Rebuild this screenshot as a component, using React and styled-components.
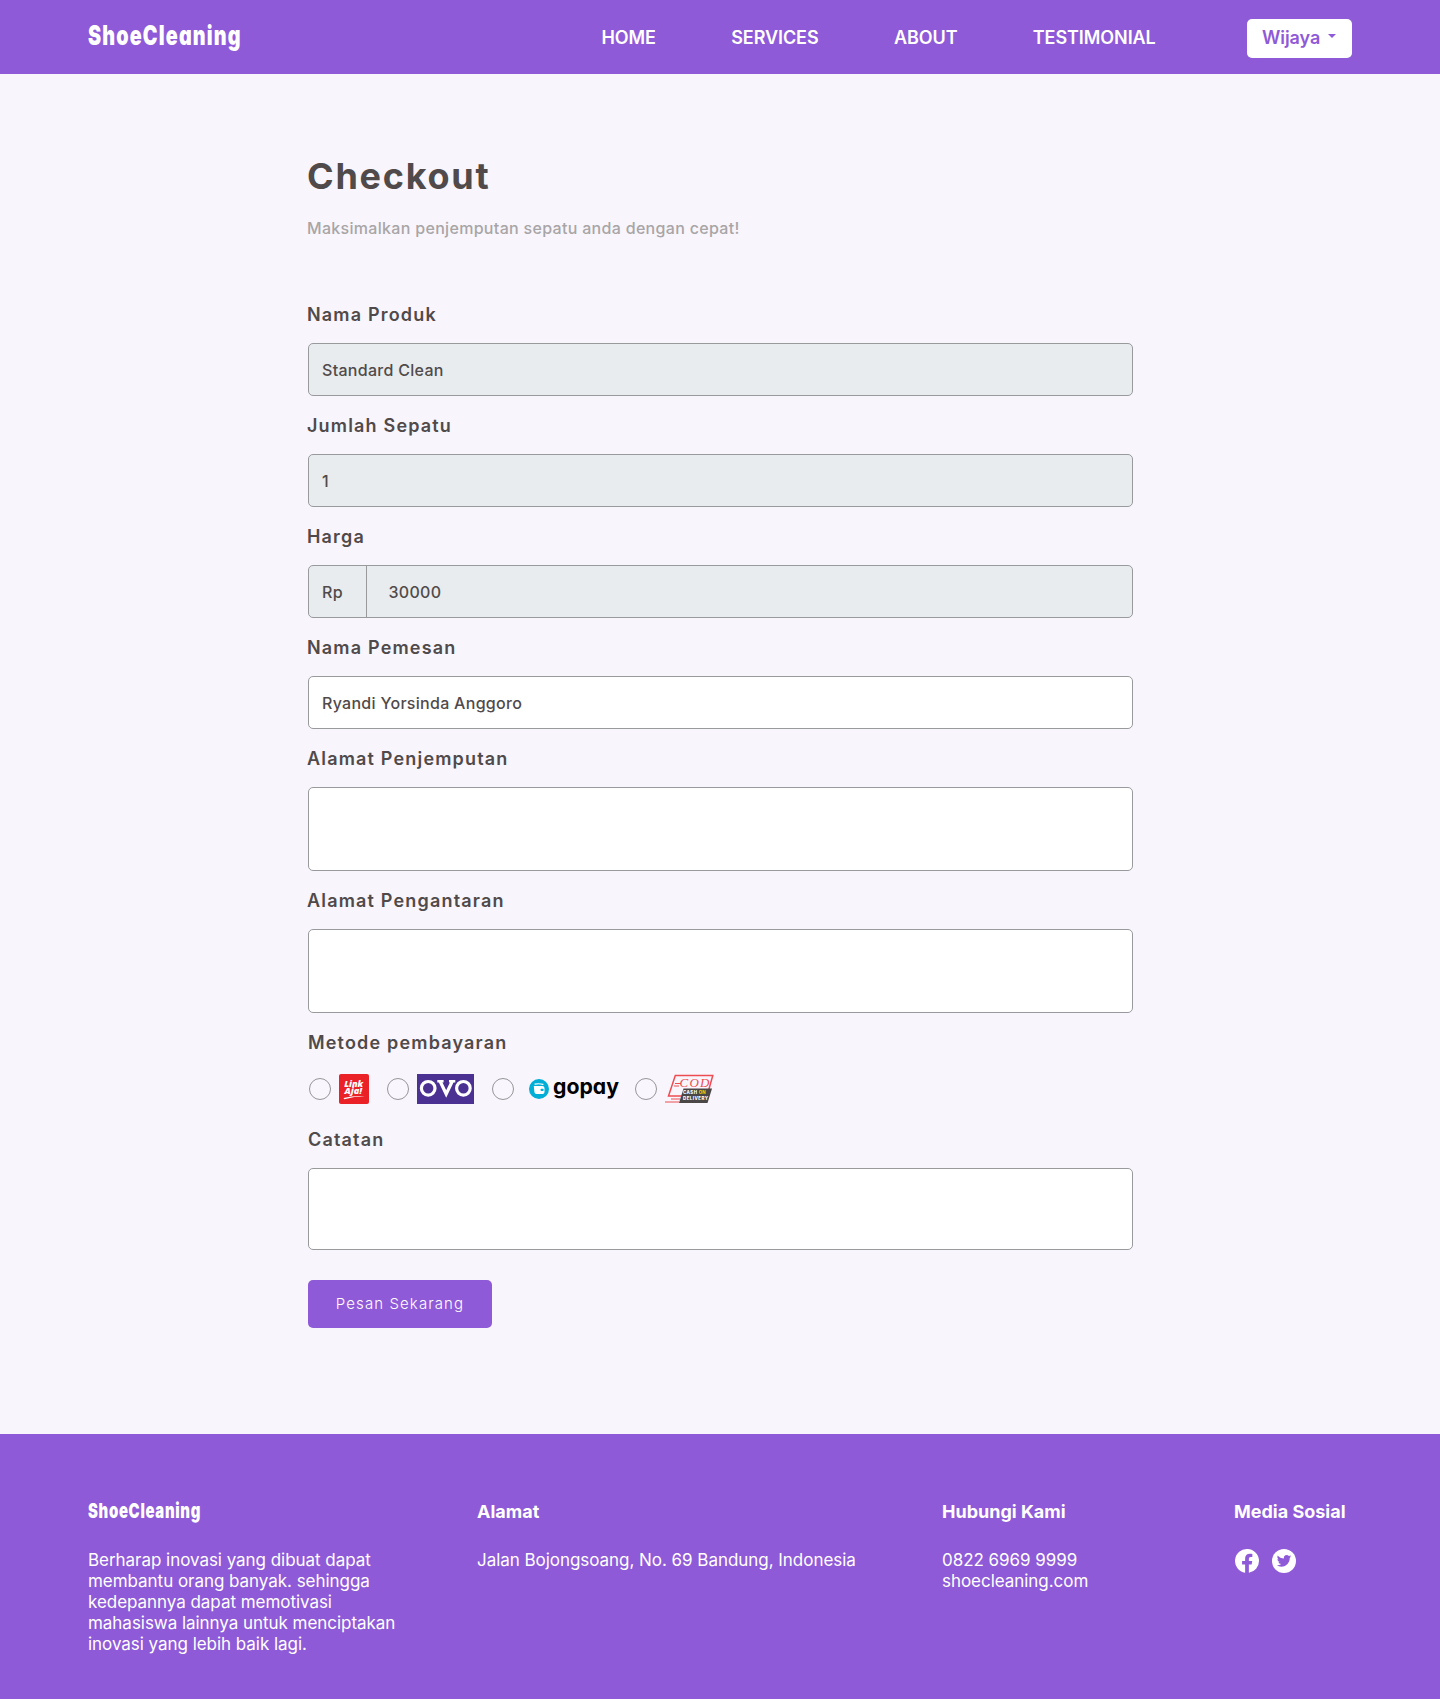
import React from "react";
import styled, { createGlobalStyle } from "styled-components";

const Global = createGlobalStyle`
  * { box-sizing: border-box; }
  body { margin: 0; background: #f8f5fd; font-family: Inter, "Liberation Sans", sans-serif; color: #504a4a; }
`;

const Header = styled.header`
  height: 74px;
  padding: 0 88px;
  background: #8f5ad8;
  display: flex;
  align-items: center;
  justify-content: space-between;
`;

const Brand = styled.div`
  width: ${(p) => p.$width}px;
  margin: ${(p) => p.$lift ?? 0}px 0 ${(p) => -(p.$lift ?? 0)}px;
  white-space: nowrap;
  color: #fff;
  font-weight: ${(p) => p.$weight};
  font-size: ${(p) => p.$size}px;
  line-height: ${(p) => p.$line}px;
  letter-spacing: ${(p) => p.$spacing}px;
  font-feature-settings: ${(p) => (p.$round ? '"cv11"' : "normal")};
  transform: scaleX(${(p) => p.$stretch});
  transform-origin: left center;
`;

const Nav = styled.nav`
  display: flex;
  align-items: center;
  gap: 75.3px;
`;

const NavLink = styled.a`
  padding-top: 2px;
  color: #fff;
  font-size: 18px;
  line-height: 22px;
  font-weight: 600;
  letter-spacing: -0.07px;
`;

const UserButton = styled.button`
  width: 105px;
  height: 39px;
  margin: 2px 0 0 16px;
  padding: 0 0 0 15px;
  display: flex;
  align-items: center;
  gap: 8px;
  border: 0;
  border-radius: 5px;
  background: #fff;
  color: #8f5ad8;
  font: 600 18px/22px Inter, sans-serif;
  letter-spacing: -0.07px;
`;

const Caret = styled.span`
  margin-top: -4px;
  border: 4px solid transparent;
  border-top-color: #8f5ad8;
  border-bottom: 0;
`;

const Main = styled.main`
  width: 826px;
  height: 1360px;
  margin: 0 auto 0 307px;
  padding: 80px 0 0;
`;

const Title = styled.h1`
  margin: 0;
  font-size: 36px;
  line-height: 44px;
  font-weight: 700;
  letter-spacing: 1.75px;
`;

const Subtitle = styled.p`
  margin: 20px 0 0;
  font-size: 16px;
  line-height: 20px;
  font-weight: 500;
  letter-spacing: 0.31px;
  color: #a8a5a6;
`;

const Form = styled.form`
  margin-top: 66px;
  display: flex;
  flex-direction: column;
`;

const Field = styled.div`
  display: flex;
  flex-direction: column;
  margin-bottom: ${(p) => p.$after ?? 19}px;
`;

const Label = styled.label`
  height: 22px;
  margin-bottom: 17px;
  padding-left: ${(p) => p.$inset ?? 0}px;
  font-size: 18px;
  line-height: 22px;
  font-weight: 600;
  letter-spacing: 1.18px;
`;

const Box = styled.div`
  height: ${(p) => p.$height ?? 53}px;
  margin-left: 1px;
  display: flex;
  overflow: hidden;
  border: 1px solid #999a9c;
  border-radius: 5px;
  background: ${(p) => (p.$locked ? "#e8ecef" : "#fff")};
`;

const Prefix = styled.span`
  width: 58px;
  padding-left: 13px;
  display: flex;
  align-items: center;
  border-right: 1px solid #999a9c;
  font-size: 16px;
  font-weight: 500;
  letter-spacing: 0.3px;
`;

const Input = styled.input`
  flex: 1;
  padding: 0 0 0 ${(p) => p.$indent ?? 13}px;
  border: 0;
  outline: 0;
  background: transparent;
  color: #504a4a;
  font: 500 16px/20px Inter, sans-serif;
  letter-spacing: 0.29px;
`;

const TextArea = styled.textarea`
  flex: 1;
  padding: 12px 13px;
  border: 0;
  outline: 0;
  resize: none;
  background: transparent;
  font: 500 16px/20px Inter, sans-serif;
`;

const Payments = styled.div`
  height: 32px;
  margin-top: 2px;
  padding-left: 2px;
  display: flex;
  align-items: center;
`;

const Option = styled.label`
  display: flex;
  align-items: center;
  gap: ${(p) => p.$gap}px;
  margin-right: ${(p) => p.$after}px;
`;

const Radio = styled.input`
  appearance: none;
  width: 22px;
  height: 22px;
  margin: 0;
  border: 1px solid #969598;
  border-radius: 50%;
  background: #f9f7fd;
`;

const Submit = styled.button`
  width: 184px;
  height: 48px;
  margin-left: 1px;
  border: 0;
  border-radius: 5px;
  background: #8f5ad8;
  color: #fff;
  font: 300 15px/18px Inter, sans-serif;
  letter-spacing: 1.1px;
`;

const Footer = styled.footer`
  height: 265px;
  padding: 67px 88px 0;
  display: grid;
  grid-template-columns: 389px 465px 292px auto;
  background: #8f5ad8;
  color: #fff;
`;

const Column = styled.section`
  display: flex;
  flex-direction: column;
  gap: 27px;
`;

const Heading = styled.h2`
  margin: 0;
  font-size: 18px;
  line-height: 22px;
  font-weight: 700;
`;

const Copy = styled.p`
  width: ${(p) => p.$width ?? 400}px;
  margin: 0;
  font-size: 17px;
  line-height: 21px;
  font-weight: 400;
  letter-spacing: -0.04px;
`;

const Socials = styled.div`
  margin-top: -1px;
  padding-left: 1px;
  display: flex;
  gap: 13px;
`;

function LinkAja() {
  return (
    <svg width="30" height="30" viewBox="0 0 30 30">
      <rect width="30" height="30" rx="2" fill="#ea2127" />
      <text fill="#fff" fontFamily="Open Sans, sans-serif" fontWeight="800" fontStyle="italic" fontSize="9">
        <tspan x="5.2" y="12.8" textLength="19" lengthAdjust="spacingAndGlyphs">Link</tspan>
        <tspan x="5.5" y="20" textLength="17.5" lengthAdjust="spacingAndGlyphs">Aja!</tspan>
      </text>
      <path d="M4.5 24Q15 21.5 26 22.3Q15 22.4 5.4 25.2Z" fill="#fff" />
    </svg>
  );
}

function Ovo() {
  return (
    <svg width="57" height="30" viewBox="0 0 57 30">
      <rect width="57" height="30" fill="#4b3192" />
      <g fill="none" stroke="#fff" strokeWidth="3.2">
        <circle cx="11.2" cy="14.3" r="6.8" />
        <circle cx="46.4" cy="14.3" r="6.8" />
        <path d="M23.2 7.5L29.2 20L35.2 7.5" />
        <path d="M20.3 7.2H26.6M32 7.2H38.3" strokeWidth="2.4" />
      </g>
    </svg>
  );
}

function Gopay() {
  return (
    <svg width="90" height="30" viewBox="0 -2 90 30">
      <circle cx="10" cy="13" r="10" fill="#00aed6" />
      <path d="M6 8.2Q10 7.2 14 8.4" stroke="#fff" strokeWidth="1.2" fill="none" strokeLinecap="round" />
      <path d="M4.8 10H13.2Q15.5 10 15.5 12V16Q15.5 18 13.5 18H7.5Q5.6 18 5.4 16Z" fill="#fff" />
      <rect x="11.5" y="12.8" width="3.2" height="2.2" rx="1" fill="#00aed6" />
      <text
        x="24"
        y="17.8"
        fontFamily="Inter, sans-serif"
        fontWeight="700"
        fontSize="21.5"
        textLength="66"
        lengthAdjust="spacingAndGlyphs"
        style={{ fontFeatureSettings: '"cv11"' }}
      >
        gopay
      </text>
    </svg>
  );
}

function Cod() {
  return (
    <svg width="50" height="30" viewBox="0 0 50 30">
      <path d="M10.3 1.5H47.8L42 22H3.5Z" fill="none" stroke="#ed4c50" strokeWidth="1.5" />
      <path d="M10 9.5H16M9 12H14M0 28H14M6 25H15" stroke="#ed4c50" strokeWidth="1" />
      <text x="14.5" y="12.7" fill="#ed4c50" fontFamily="Liberation Serif, serif" fontStyle="italic" fontSize="13" textLength="30" lengthAdjust="spacing">COD</text>
      <path d="M18.5 14.5H47L42.5 29H14Z" fill="#4b4747" />
      <g fill="#fff" fontFamily="Inter, sans-serif" fontWeight="800" fontSize="4.4">
        <text x="18" y="20.3" textLength="14">CASH</text>
        <text x="33.7" y="20.3" fill="#ffc20e" textLength="7">ON</text>
        <text x="18" y="26.4" textLength="25">DELIVERY</text>
      </g>
    </svg>
  );
}

function Facebook() {
  return (
    <svg width="24" height="24" viewBox="0 0 24 24" fill="#fff">
      <path d="M24 12A12 12 0 1 0 10.13 23.85V15.47H7.08V12H10.13V9.36C10.13 6.35 11.92 4.69 14.66 4.69C15.97 4.69 17.34 4.92 17.34 4.92V7.88H15.83C14.34 7.88 13.87 8.8 13.87 9.75V12H17.2L16.67 15.47H13.87V23.85A12 12 0 0 0 24 12Z" />
    </svg>
  );
}

function Twitter() {
  return (
    <svg width="24" height="24" viewBox="0 0 24 24">
      <circle cx="12" cy="12" r="12" fill="#fff" />
      <path
        transform="translate(4.8 4.6) scale(.6)"
        fill="#8f5ad8"
        d="M23.953 4.57a10 10 0 01-2.825.775 4.958 4.958 0 002.163-2.723c-.951.555-2.005.959-3.127 1.184a4.92 4.92 0 00-8.384 4.482C7.69 8.095 4.067 6.13 1.64 3.162a4.822 4.822 0 00-.666 2.475c0 1.71.87 3.213 2.188 4.096a4.904 4.904 0 01-2.228-.616v.06a4.923 4.923 0 003.946 4.827 4.996 4.996 0 01-2.212.085 4.936 4.936 0 004.604 3.417 9.867 9.867 0 01-6.102 2.105c-.39 0-.779-.023-1.17-.067a13.995 13.995 0 007.557 2.209c9.053 0 13.998-7.496 13.998-13.985 0-.21 0-.42-.015-.63A9.935 9.935 0 0024 4.59z"
      />
    </svg>
  );
}

export default function App() {
  return (
    <>
      <Global />
      <Header>
        <Brand $width={154} $size={27} $line={34} $lift={-1} $weight={900} $spacing={1.6} $stretch={0.73} $round>ShoeCleaning</Brand>
        <Nav>
          <NavLink>HOME</NavLink>
          <NavLink>SERVICES</NavLink>
          <NavLink>ABOUT</NavLink>
          <NavLink>TESTIMONIAL</NavLink>
          <UserButton>Wijaya<Caret /></UserButton>
        </Nav>
      </Header>
      <Main>
        <Title>Checkout</Title>
        <Subtitle>Maksimalkan penjemputan sepatu anda dengan cepat!</Subtitle>
        <Form>
          <Field>
            <Label>Nama Produk</Label>
            <Box $locked><Input readOnly value="Standard Clean" /></Box>
          </Field>
          <Field>
            <Label>Jumlah Sepatu</Label>
            <Box $locked><Input readOnly value="1" /></Box>
          </Field>
          <Field>
            <Label>Harga</Label>
            <Box $locked><Prefix>Rp</Prefix><Input readOnly $indent={21.5} value="30000" /></Box>
          </Field>
          <Field>
            <Label>Nama Pemesan</Label>
            <Box><Input defaultValue="Ryandi Yorsinda Anggoro" /></Box>
          </Field>
          <Field>
            <Label>Alamat Penjemputan</Label>
            <Box $height={84}><TextArea /></Box>
          </Field>
          <Field>
            <Label>Alamat Pengantaran</Label>
            <Box $height={84}><TextArea /></Box>
          </Field>
          <Field $after={24}>
            <Label $inset={1}>Metode pembayaran</Label>
            <Payments>
              <Option $gap={8} $after={18}><Radio type="radio" name="pay" /><LinkAja /></Option>
              <Option $gap={8} $after={18}><Radio type="radio" name="pay" /><Ovo /></Option>
              <Option $gap={15} $after={16}><Radio type="radio" name="pay" /><Gopay /></Option>
              <Option $gap={8} $after={0}><Radio type="radio" name="pay" /><Cod /></Option>
            </Payments>
          </Field>
          <Field $after={30}>
            <Label $inset={1}>Catatan</Label>
            <Box $height={82}><TextArea /></Box>
          </Field>
          <Submit type="button">Pesan Sekarang</Submit>
        </Form>
      </Main>
      <Footer>
        <Column>
          <Brand $width={112} $size={20.5} $line={22} $lift={-1} $weight={900} $spacing={0.95} $stretch={0.725}>ShoeCleaning</Brand>
          <Copy $width={320}>Berharap inovasi yang dibuat dapat membantu orang banyak. sehingga kedepannya dapat memotivasi mahasiswa lainnya untuk menciptakan inovasi yang lebih baik lagi.</Copy>
        </Column>
        <Column>
          <Heading>Alamat</Heading>
          <Copy>Jalan Bojongsoang, No. 69 Bandung, Indonesia</Copy>
        </Column>
        <Column>
          <Heading>Hubungi Kami</Heading>
          <Copy $width={200}>0822 6969 9999<br />shoecleaning.com</Copy>
        </Column>
        <Column>
          <Heading>Media Sosial</Heading>
          <Socials><Facebook /><Twitter /></Socials>
        </Column>
      </Footer>
    </>
  );
}
